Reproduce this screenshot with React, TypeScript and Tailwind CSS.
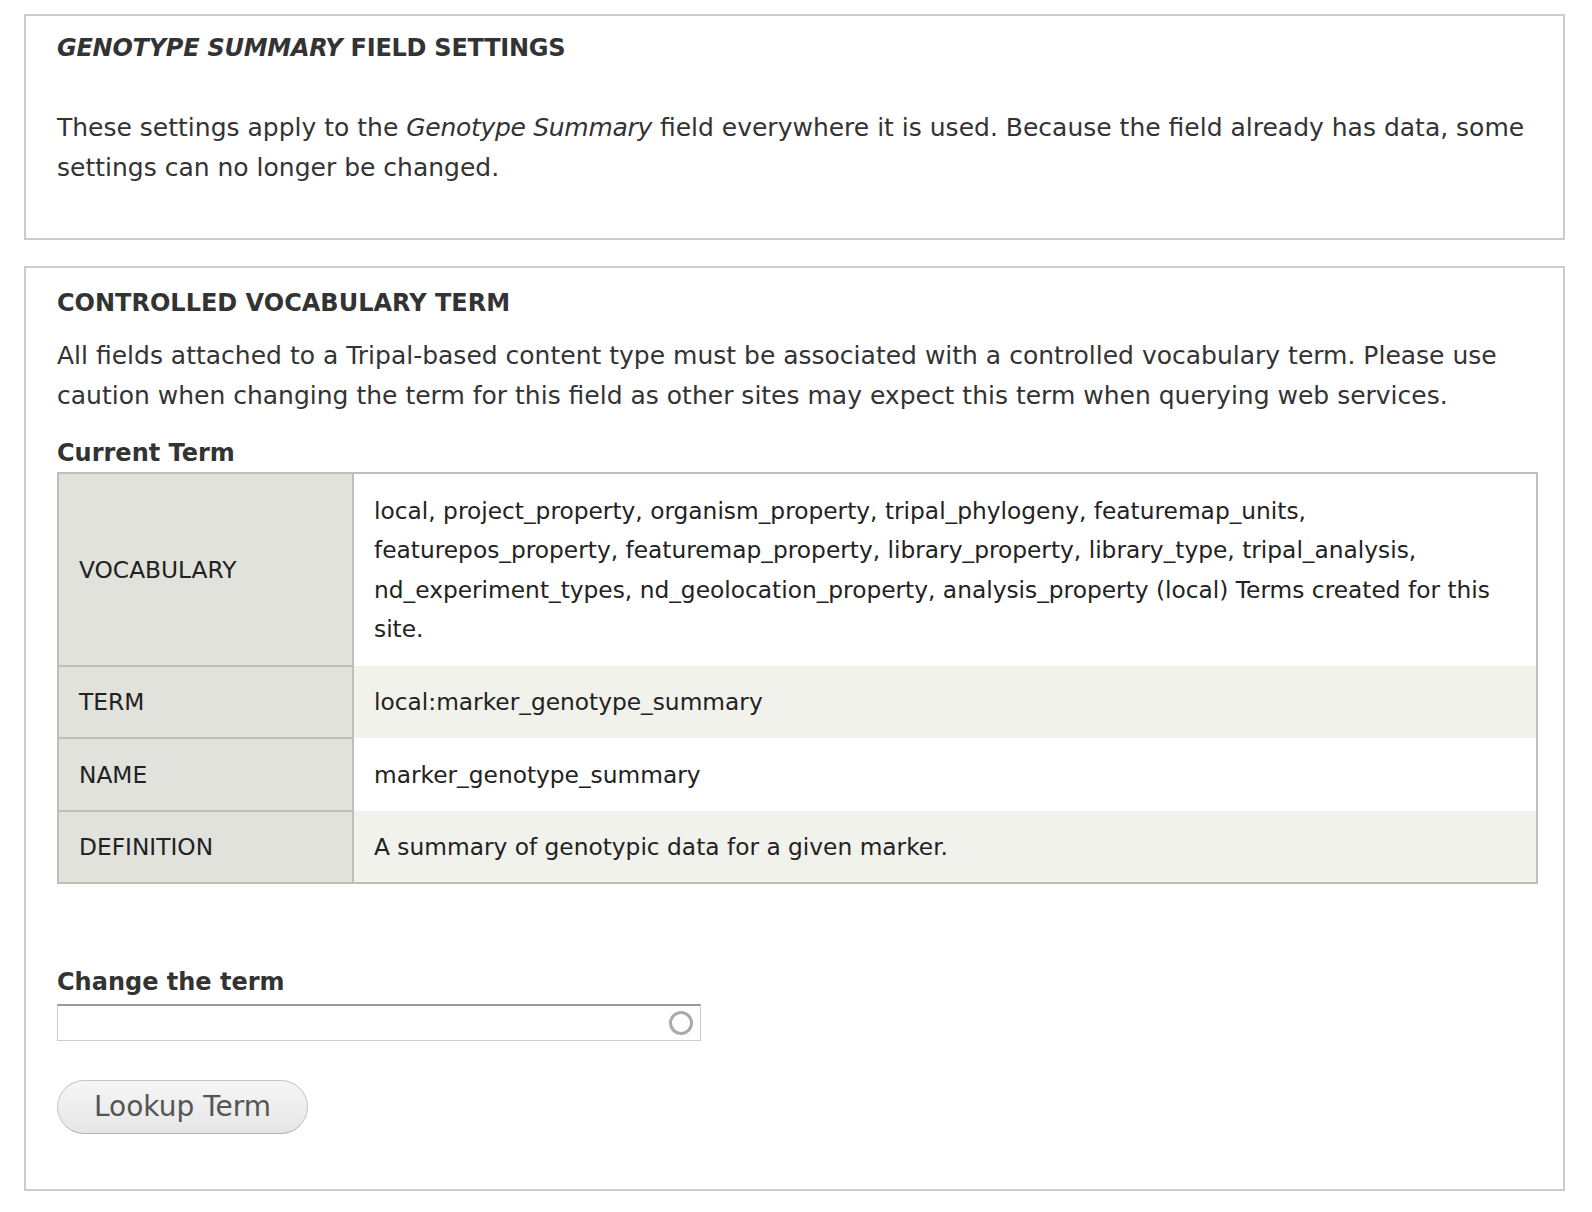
import React from "react";

const font = { fontFamily: '"DejaVu Sans", Verdana, sans-serif' };

const rows = [
  {
    label: "VOCABULARY",
    lines: [
      "local, project_property, organism_property, tripal_phylogeny, featuremap_units,",
      "featurepos_property, featuremap_property, library_property, library_type, tripal_analysis,",
      "nd_experiment_types, nd_geolocation_property, analysis_property (local) Terms created for this",
      "site.",
    ],
  },
  { label: "TERM", lines: ["local:marker_genotype_summary"] },
  { label: "NAME", lines: ["marker_genotype_summary"] },
  { label: "DEFINITION", lines: ["A summary of genotypic data for a given marker."] },
];

function TermTable() {
  return (
    <table className="w-full border-collapse border-2 border-[#bebfb9] text-[23.3px] leading-[39.5px] text-[#222]">
      <tbody>
        {rows.map((r, i) => (
          <tr key={r.label} className={i % 2 === 1 ? "bg-[#f2f2ed]" : "bg-white"}>
            <th
              className={
                "w-[295px] border-2 border-[#bebfb9] bg-[#e1e2dc] px-5 text-left font-normal " +
                (i === 0 ? "py-[16.75px]" : "py-[15.5px]")
              }
            >
              {r.label}
            </th>
            <td className={"px-5 " + (i === 0 ? "py-[16.75px]" : "py-[15.5px]")}>
              {r.lines.map((l, j) => (
                <React.Fragment key={j}>
                  {l}
                  {j < r.lines.length - 1 && <br />}
                </React.Fragment>
              ))}
            </td>
          </tr>
        ))}
      </tbody>
    </table>
  );
}

export default function App() {
  return (
    <div className="min-h-[1212px] bg-white pt-[14px] pl-[24px] pr-[27px] text-[#333]" style={font}>
      {/* field settings */}
      <div className="border-2 border-[#cccccc] pl-[31px] pr-[30px] pt-[16px] pb-[51px]">
        <h2 className="text-[24px] font-bold leading-[32px] tracking-[-0.25px]">
          <em>GENOTYPE SUMMARY</em> FIELD SETTINGS
        </h2>
        <p className="mt-[44px] text-[25px] leading-[39.5px]">
          These settings apply to the <em className="tracking-[-0.3px]">Genotype Summary</em> field everywhere it is used. Because the field already has data, some
          <br />
          settings can no longer be changed.
        </p>
      </div>

      {/* controlled vocabulary term */}
      <div className="mt-[26px] border-2 border-[#cccccc] pl-[31px] pr-[25px] pt-[19px] pb-[55px]">
        <h2 className="text-[24px] font-bold leading-[32px]">CONTROLLED VOCABULARY TERM</h2>
        <p className="mt-[17px] text-[25px] leading-[39.5px]">
          All fields attached to a Tripal-based content type must be associated with a controlled vocabulary term. Please use
          <br />
          caution when changing the term for this field as other sites may expect this term when querying web services.
        </p>
        <h3 className="mt-[22px] text-[24px] font-bold leading-[32px]">Current Term</h3>
        <div className="mt-[3px]">
          <TermTable />
        </div>

        <label className="mt-[82px] block text-[24px] font-bold leading-[32px]">Change the term</label>
        <div className="relative mt-[6px] h-[37px] w-[644px] border border-[#cccccc] border-t-2 border-t-[#999999] bg-white">
          <span className="absolute right-[7px] top-[5px] block h-[24px] w-[24px] rounded-full border-[3px] border-[#aaaaaa] blur-[0.6px]" />
        </div>

        <button className="mt-[39px] h-[54px] w-[251px] rounded-full border border-[#c6c6c6] border-b-[#b0b0b0] bg-gradient-to-b from-[#f6f6f6] to-[#e6e6e6] text-[28px] text-[#555]">
          Lookup Term
        </button>
      </div>
    </div>
  );
}
